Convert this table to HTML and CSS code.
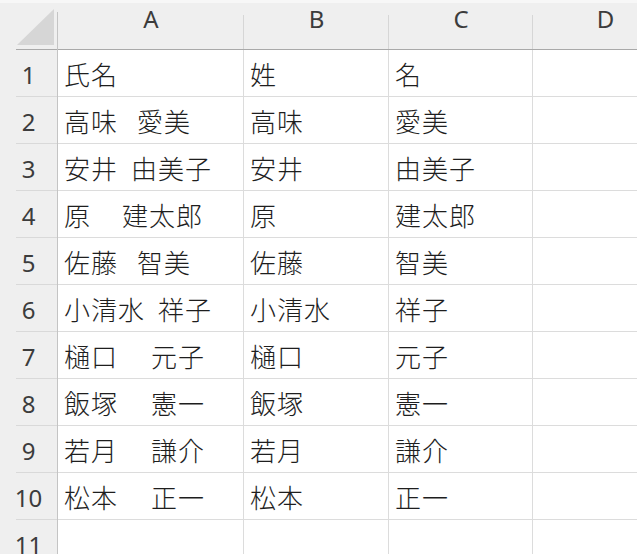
FILE: index.html
```html
<!DOCTYPE html>
<html lang="ja">
<head>
<meta charset="utf-8">
<title>Sheet</title>
<link rel="stylesheet" href="styles.css">
</head>
<body>
<div class="sheet">
  <div class="corner"><svg class="tri" width="58" height="50" viewBox="0 0 58 50"><polygon points="17,45 54,45 54,9" fill="#d6d6d6"/></svg></div>
  <div class="ch">A</div>
  <div class="ch">B</div>
  <div class="ch">C</div>
  <div class="ch">D</div>

  <div class="rh">1</div><div class="c">氏名</div><div class="c">姓</div><div class="c">名</div><div class="c"></div>
  <div class="rh">2</div><div class="c">高味<span class="sp sp-m">　</span>愛美</div><div class="c">高味</div><div class="c">愛美</div><div class="c"></div>
  <div class="rh">3</div><div class="c">安井<span class="sp sp-s">&nbsp;</span>由美子</div><div class="c">安井</div><div class="c">由美子</div><div class="c"></div>
  <div class="rh">4</div><div class="c">原<span class="sp sp-xl">　</span>建太郎</div><div class="c">原</div><div class="c">建太郎</div><div class="c"></div>
  <div class="rh">5</div><div class="c">佐藤<span class="sp sp-m">　</span>智美</div><div class="c">佐藤</div><div class="c">智美</div><div class="c"></div>
  <div class="rh">6</div><div class="c">小清水<span class="sp sp-s">&nbsp;</span>祥子</div><div class="c">小清水</div><div class="c">祥子</div><div class="c"></div>
  <div class="rh">7</div><div class="c">樋口<span class="sp sp-l">　</span>元子</div><div class="c">樋口</div><div class="c">元子</div><div class="c"></div>
  <div class="rh">8</div><div class="c">飯塚<span class="sp sp-l">　</span>憲一</div><div class="c">飯塚</div><div class="c">憲一</div><div class="c"></div>
  <div class="rh">9</div><div class="c">若月<span class="sp sp-l">　</span>謙介</div><div class="c">若月</div><div class="c">謙介</div><div class="c"></div>
  <div class="rh">10</div><div class="c">松本<span class="sp sp-l">　</span>正一</div><div class="c">松本</div><div class="c">正一</div><div class="c"></div>
  <div class="rh">11</div><div class="c"></div><div class="c"></div><div class="c"></div><div class="c"></div>
</div>
</body>
</html>
```
FILE: styles.css
```css
html, body {
  margin: 0;
  padding: 0;
  background: #ffffff;
  overflow: hidden;
}

.sheet {
  display: grid;
  grid-template-columns: 58px 186px 145px 144px 145px;
  grid-template-rows: 50px repeat(11, 47px);
  width: 678px;
}

.corner {
  background:
    linear-gradient(#c4c4c4, #c4c4c4) no-repeat 57px 12px / 1px 38px,
    linear-gradient(#a9a9a9, #a9a9a9) no-repeat 16px 49px / 42px 1px,
    linear-gradient(#f7f7f7 0 3px, #efefef 3px);
}

.tri {
  display: block;
}

.ch {
  box-sizing: border-box;
  padding-top: 7px;
  text-align: center;
  font-family: "Noto Sans", "Liberation Sans", sans-serif;
  font-size: 24px;
  line-height: 24px;
  color: #3c3c3c;
  border-bottom: 1px solid #a9a9a9;
  background:
    linear-gradient(#d6d6d6, #d6d6d6) no-repeat 100% 15px / 1px 34px,
    linear-gradient(#f7f7f7 0 3px, #efefef 3px);
}

.rh {
  box-sizing: border-box;
  display: flex;
  align-items: center;
  justify-content: center;
  padding-top: 2px;
  font-family: "Noto Sans", "Liberation Sans", sans-serif;
  font-size: 24px;
  color: #3c3c3c;
  border-right: 1px solid #c4c4c4;
  background:
    linear-gradient(#d9d9d9, #d9d9d9) no-repeat 16px 100% / 41px 1px,
    #efefef;
}

.c {
  box-sizing: border-box;
  display: flex;
  align-items: center;
  padding: 0 0 0 6px;
  border-right: 1px solid #dcdcdc;
  border-bottom: 1px solid #dcdcdc;
  font-family: "Noto Sans CJK JP", "Noto Sans", sans-serif;
  font-size: 26px;
  font-weight: 300;
  letter-spacing: 1px;
  color: #1e1e1e;
  white-space: nowrap;
  overflow: hidden;
}

.sp {
  display: inline-block;
  letter-spacing: 0;
  white-space: pre;
}

.sp-s { width: 13px; }
.sp-m { width: 19px; }
.sp-xl { width: 31px; }
.sp-l { width: 33px; }
```
